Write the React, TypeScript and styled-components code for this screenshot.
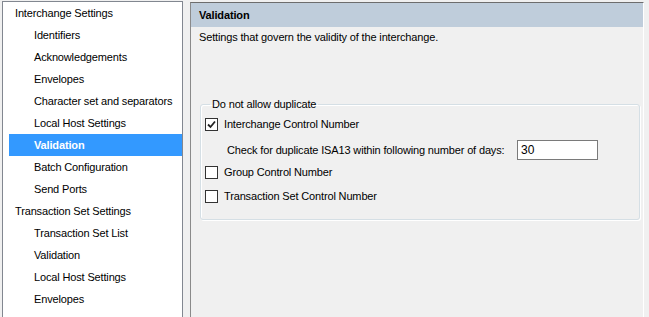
import * as React from 'react';
import styled, { createGlobalStyle } from 'styled-components';

const GlobalStyle = createGlobalStyle`
    html, body {
        margin: 0;
        padding: 0;
        background: #f0f0f0;
        overflow: hidden;
    }
    body {
        font-family: "Liberation Sans", Arial, sans-serif;
        font-size: 11px;
        letter-spacing: -0.15px;
        color: #000;
    }
`;

const Window = styled.div`
    display: flex;
    align-items: flex-start;
    gap: 7px;
    padding: 1px 0 0 2px;
    height: 316px;
    overflow: hidden;
`;

const Tree = styled.ul`
    list-style: none;
    margin: 0;
    padding: 0;
    width: 179px;
    height: 340px;
    background: #fff;
    border: 1px solid #828790;
    border-bottom: none;
`;

const TreeRow = styled.li<{ $level: number; $selected?: boolean }>`
    height: 22px;
    line-height: 22px;
    margin-left: 6px;
    padding-left: ${p => (p.$level ? 25 : 6)}px;
    white-space: nowrap;
    background: ${p => (p.$selected ? '#3399ff' : 'transparent')};
    color: ${p => (p.$selected ? '#fff' : '#000')};
    font-weight: ${p => (p.$selected ? 'bold' : 'normal')};
`;

const Panel = styled.div`
    margin-top: 1px;
    width: 452px;
    height: 340px;
    border-top: 1px solid #6d6d6d;
    border-left: 1px solid #8a8a8a;
    border-right: 1px solid #fff;
    display: flex;
    flex-direction: column;
`;

const Header = styled.div`
    height: 24px;
    line-height: 24px;
    padding-left: 8px;
    background: #bfcddb;
    font-weight: bold;
`;

const Description = styled.div`
    margin-top: 3px;
    padding-left: 8px;
    line-height: 14px;
`;

const Group = styled.fieldset`
    margin: 54px 3px 0 9px;
    padding: 2px 0 12px 4px;
    border: 1px solid #d5dfe5;
    border-radius: 3px;
    box-shadow: inset 1px 1px 0 #fff, 1px 1px 0 #fff;
    display: flex;
    flex-direction: column;
`;

const Legend = styled.legend`
    margin-left: 5px;
    padding: 0 2px;
    line-height: 13px;
`;

const CheckRow = styled.label<{ $space?: number }>`
    display: flex;
    align-items: center;
    gap: 6px;
    height: 22px;
    margin-top: ${p => p.$space || 0}px;
`;

const Box = styled.span`
    width: 11px;
    height: 11px;
    border: 1px solid #333;
    background: #fff;
    display: flex;
    align-items: center;
    justify-content: center;
`;

const DaysRow = styled.div`
    display: flex;
    align-items: center;
    height: 22px;
    margin-top: 4px;
    padding-left: 22px;
`;

const DaysLabel = styled.span`
    width: 290px;
`;

const DaysInput = styled.div`
    width: 76px;
    height: 18px;
    line-height: 18px;
    padding-left: 3px;
    border: 1px solid #7a7a7a;
    background: #fff;
    font-size: 12px;
    letter-spacing: 0;
`;

function CheckBox({ checked, label, space }: { checked?: boolean; label: string; space?: number }) {
    return (
        <CheckRow $space={space}>
            <Box>
                {checked && (
                    <svg width="9" height="9" viewBox="0 0 9 9">
                        <path d="M1 4.5 L3.5 7 L8 1.5" fill="none" stroke="#222" strokeWidth="1.8" />
                    </svg>
                )}
            </Box>
            {label}
        </CheckRow>
    );
}

const items: { text: string; level: number; selected?: boolean }[] = [
    { text: 'Interchange Settings', level: 0 },
    { text: 'Identifiers', level: 1 },
    { text: 'Acknowledgements', level: 1 },
    { text: 'Envelopes', level: 1 },
    { text: 'Character set and separators', level: 1 },
    { text: 'Local Host Settings', level: 1 },
    { text: 'Validation', level: 1, selected: true },
    { text: 'Batch Configuration', level: 1 },
    { text: 'Send Ports', level: 1 },
    { text: 'Transaction Set Settings', level: 0 },
    { text: 'Transaction Set List', level: 1 },
    { text: 'Validation', level: 1 },
    { text: 'Local Host Settings', level: 1 },
    { text: 'Envelopes', level: 1 }
];

export default function App() {
    return (
        <>
            <GlobalStyle />
            <Window>
                <Tree>
                    {items.map((item, index) => (
                        <TreeRow key={index} $level={item.level} $selected={item.selected}>
                            {item.text}
                        </TreeRow>
                    ))}
                </Tree>
                <Panel>
                    <Header>Validation</Header>
                    <Description>Settings that govern the validity of the interchange.</Description>
                    <Group>
                        <Legend>Do not allow duplicate</Legend>
                        <CheckBox checked label="Interchange Control Number" />
                        <DaysRow>
                            <DaysLabel>Check for duplicate ISA13 within following number of days:</DaysLabel>
                            <DaysInput>30</DaysInput>
                        </DaysRow>
                        <CheckBox label="Group Control Number" />
                        <CheckBox label="Transaction Set Control Number" space={2} />
                    </Group>
                </Panel>
            </Window>
        </>
    );
}
